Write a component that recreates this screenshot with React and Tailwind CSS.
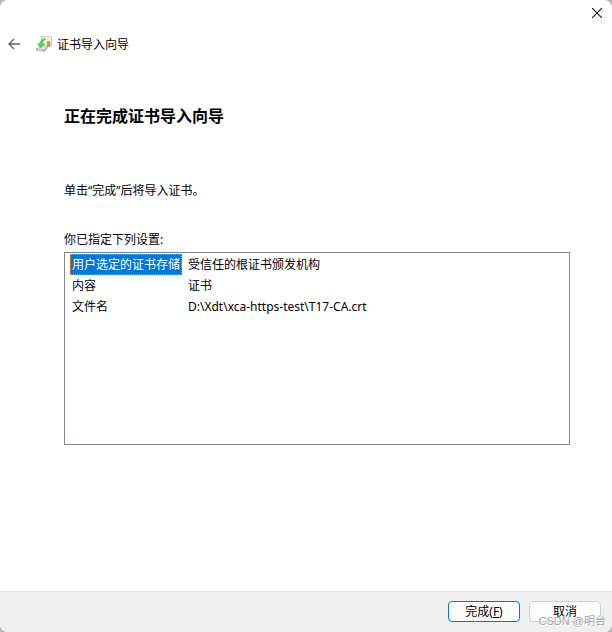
const settings = [
  { name: '用户选定的证书存储', value: '受信任的根证书颁发机构', selected: true },
  { name: '内容', value: '证书' },
  { name: '文件名', value: 'D:\\Xdt\\xca-https-test\\T17-CA.crt' },
];

function BackIcon() {
  return (
    <svg className="w-3 h-3" viewBox="0 0 12 12" fill="none" stroke="#5f5f5f" strokeWidth="1.3">
      <path d="M12 6H1M6 1L1 6l5 5" />
    </svg>
  );
}

function CloseIcon() {
  return (
    <svg className="w-[10px] h-[10px]" viewBox="0 0 10 10" fill="none" stroke="#111" strokeWidth="1.1">
      <path d="M0 0l10 10M10 0L0 10" />
    </svg>
  );
}

function CertificateIcon() {
  return (
    <svg className="w-4 h-4" viewBox="0 0 16 16" aria-hidden="true">
      {/* certificate sheet */}
      <path d="M5.5 .5h10v9.500h-10z" fill="#f6f3ef" stroke="#d3c7b5" />
      <path d="M9 3.500h4" stroke="#dcdcdf" />
      <path d="M11 8v3l1.500-1 1.500 1V8z" fill="#6f88c6" />
      <circle cx="12.500" cy="6.800" r="2" fill="#f0a52c" />
      <circle cx="12.500" cy="6.800" r=".7" fill="#cf7414" />
      {/* drive */}
      <path d="M.4 12.800L3 11l8.300-.7-2.800 3.300z" fill="#eceeef" stroke="#b9bdc0" strokeWidth=".6" />
      <path d="M.4 12.800l8.100.8 2.800-3.300v2l-2.800 3.300-8.100-1.200z" fill="#c0c4c6" stroke="#979b9e" strokeWidth=".5" />
      <path d="M2 14l4 .5" stroke="#f7f7f7" strokeWidth=".7" />
      {/* import arrow */}
      <path d="M8.300 2C6 3.200 4.300 5 3.700 7.300L1.500 7.500l2.800 4.400 4.600-3.700-2.100-.6C7 5.700 8 4.200 9.500 3z" fill="#4bd556" stroke="#3dba4a" strokeWidth=".4" />
    </svg>
  );
}

export default function App() {
  return (
    <div className="min-h-screen flex bg-[#b8b8b8] font-['Noto_Sans','Noto_Sans_CJK_SC',sans-serif] text-xs text-black">
      <main className="relative flex-1 flex flex-col bg-white rounded-lg overflow-hidden">
        {/* Title bar */}
        <div className="flex justify-end h-7 pb-[2px]">
          <button type="button" aria-label="关闭" className="w-[30px] flex items-center justify-center">
            <CloseIcon />
          </button>
        </div>

        <header className="flex items-center h-8 px-2">
          <button type="button" aria-label="返回" className="mr-4">
            <BackIcon />
          </button>
          <CertificateIcon />
          <span className="ml-[5px] pt-[2px]">证书导入向导</span>
        </header>

        <section className="flex-1 pl-16 pr-[42px] pt-11">
          <h1 className="text-base leading-6 font-bold">正在完成证书导入向导</h1>
          <p className="mt-[53px] leading-5">单击“完成”后将导入证书。</p>
          <p id="settings-label" className="mt-[29px] leading-5">你已指定下列设置:</p>

          {/* Settings list */}
          <div className="mt-[2px] h-[193px] border border-[#828790] px-[5px] pt-px">
            <table aria-labelledby="settings-label" className="w-full border-separate border-spacing-0">
              <tbody>
                {settings.map((row) => (
                  <tr key={row.name} className="h-[21px]">
                    <th
                      scope="row"
                      className={`w-28 p-0 text-left font-normal leading-[19px] whitespace-nowrap ${
                        row.selected ? 'bg-[#0078d7] text-white border border-dotted border-[#ff8728]' : 'border border-transparent'
                      }`}
                    >
                      <span className="pl-px">{row.name}</span>
                    </th>
                    <td className="p-0 pl-[6px] leading-[19px]">{row.value}</td>
                  </tr>
                ))}
              </tbody>
            </table>
          </div>
        </section>

        {/* Footer */}
        <footer className="flex justify-end items-start gap-[9px] h-[41px] pt-[9px] pr-[11px] bg-[#f0f0f0] border-t border-[#dfdfdf]">
          <button type="button" className="w-[72px] h-[21px] leading-[19px] rounded bg-[#fdfdfd] border border-[#0078d4]">
            完成(<u>F</u>)
          </button>
          <button type="button" className="w-[72px] h-[21px] leading-[19px] rounded bg-[#fdfdfd] border border-[#d0d0d0]">
            取消
          </button>
        </footer>

        <span className="absolute right-[6px] bottom-px font-['Liberation_Sans','Noto_Sans_CJK_SC',sans-serif] leading-5 text-[11px] text-[#a9a9a9] pointer-events-none [text-shadow:1px_1px_0_#ffffff]">
          CSDN @明台
        </span>
      </main>
    </div>
  );
}
